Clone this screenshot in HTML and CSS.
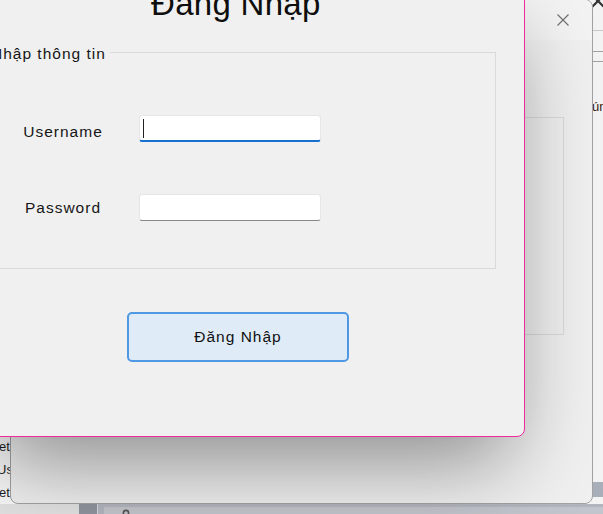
FILE: index.html
```html
<!DOCTYPE html>
<html lang="vi">
<head>
<meta charset="utf-8">
<title>Đăng Nhập</title>
<link rel="stylesheet" href="styles.css">
</head>
<body>
<div class="desktop">
  <div class="back-win">
    <div class="back-left">
      <div class="bl-item bl-get">Get</div>
      <div class="bl-item bl-users">Users</div>
      <div class="bl-item bl-set">Set</div>
    </div>
    <div class="back-main"></div>
    <div class="back-right">
      <svg class="back-close" width="14" height="14" viewBox="0 0 14 14"><path d="M1 1L13 13M13 1L1 13" stroke="#333" stroke-width="2.2" fill="none"/></svg>
      <div class="br-line br-line1"></div>
      <div class="br-line br-line2"></div>
      <div class="br-line br-line3"></div>
      <div class="br-text">ún</div>
      <div class="br-band"></div>
    </div>
    <div class="back-footer">
      <div class="bf-light"></div>
      <div class="bf-dark"></div>
      <div class="bf-sep"></div>
      <div class="bf-panel"><div class="bf-inner"><svg class="bf-icon" width="8" height="8" viewBox="0 0 8 8"><circle cx="4" cy="4" r="2.6" stroke="#555" stroke-width="1.6" fill="none"/></svg></div></div>
    </div>
  </div>

  <div class="mid-win">
    <div class="mid-titlebar">
      <div class="mid-close">
        <svg width="12" height="12" viewBox="0 0 12 12"><path d="M0.5 0.5L11.5 11.5M11.5 0.5L0.5 11.5" stroke="#6f6f6f" stroke-width="1.1" fill="none"/></svg>
      </div>
    </div>
    <div class="mid-body">
      <div class="mid-group"></div>
    </div>
  </div>

  <div class="dialog">
    <div class="dlg-title">Đăng Nhập</div>
    <fieldset class="group">
      <legend class="group-title">Nhập thông tin</legend>
      <div class="row">
        <div class="lbl lbl-user">Username</div>
        <div class="field field-focus"><span class="caret"></span></div>
      </div>
      <div class="row row-pass">
        <div class="lbl lbl-pass">Password</div>
        <div class="field"></div>
      </div>
    </fieldset>
    <div class="btn">Đăng Nhập</div>
  </div>
</div>
</body>
</html>
```

FILE: styles.css
```css
body {
  margin: 0;
  background: #f0f0f0;
}

.desktop {
  position: relative;
  width: 603px;
  height: 514px;
  overflow: hidden;
  font-family: "Liberation Sans", Arial, sans-serif;
  color: #161616;
}

/* ---------- back window ---------- */
.back-win {
  position: absolute;
  left: 0;
  top: 0;
  width: 603px;
  height: 514px;
  display: grid;
  grid-template-columns: 10px 1fr 12px;
  grid-template-rows: 504px 10px;
  background: #f8f8f8;
}

.back-left {
  display: flex;
  flex-direction: column;
  justify-content: flex-end;
  font-size: 13px;
  line-height: 23px;
  color: #1c1c1c;
  white-space: nowrap;
}

.bl-get { margin-left: -11px; }
.bl-users { margin-left: -3px; }
.bl-set { margin-left: -9.6px; }

.back-right {
  display: flex;
  flex-direction: column;
  background: #f3f3f3;
  white-space: nowrap;
}

.back-close {
  margin-top: -6px;
  margin-left: 0;
  flex: none;
}

.br-line { height: 1px; flex: none; }
.br-line1 { margin-top: 22px; background: #c9c9c9; }
.br-line2 { margin-top: 20px; background: #a2a2a2; }
.br-line3 { margin-top: 9px; background: #a2a2a2; }

.br-text {
  margin-top: 37px;
  padding-left: 1px;
  font-size: 13px;
  line-height: 16px;
  color: #3a1a10;
}

.br-band {
  margin-top: auto;
  margin-bottom: 7px;
  height: 15px;
  background: #a9aebb;
}

.back-footer {
  grid-column: 1 / 4;
  display: flex;
}

.bf-light { width: 79px; background: #e2e2e2; }
.bf-dark { width: 18px; background: #8f949e; }
.bf-sep { width: 1px; background: #d6d9de; }
.bf-panel {
  flex: 1;
  background: #b2b5bd;
  padding: 3px 0 0 6px;
  display: flex;
}
.bf-inner {
  flex: 1;
  background: #c2c5cb;
  padding: 2px 0 0 18px;
}
.bf-icon { display: block; }

/* ---------- middle window ---------- */
.mid-win {
  position: absolute;
  left: 10px;
  top: -1px;
  width: 583px;
  height: 505px;
  box-sizing: border-box;
  border: 1px solid #a2a2a2;
  border-radius: 8px;
  background: #f0f0f0;
  display: flex;
  flex-direction: column;
  overflow: hidden;
}

.mid-titlebar {
  height: 40px;
  flex: none;
  display: flex;
  justify-content: flex-end;
  align-items: center;
  background: #f3f3f3;
}

.mid-close {
  width: 44px;
  margin-right: 7px;
  display: flex;
  justify-content: center;
}

.mid-close svg { display: block; }

.mid-body {
  flex: 1;
  display: flex;
  flex-direction: column;
  align-items: flex-end;
}

.mid-group {
  margin-top: 77px;
  margin-right: 28px;
  width: 300px;
  height: 218px;
  box-sizing: border-box;
  border: 1px solid #dadada;
}

/* ---------- login dialog ---------- */
.dialog {
  position: absolute;
  left: -20px;
  top: -20px;
  width: 545px;
  height: 457px;
  box-sizing: border-box;
  border: 1px solid #ee2a9c;
  border-radius: 8px;
  background: #f0f0f0;
  box-shadow: 0 40px 80px -15px rgba(0, 0, 0, 0.42);
  display: flex;
  flex-direction: column;
  align-items: flex-start;
}

.dlg-title {
  margin: 4px 0 0 170px;
  font-size: 33px;
  line-height: 38px;
  letter-spacing: 0.3px;
  color: #0e0e0e;
  white-space: nowrap;
}

.group {
  box-sizing: border-box;
  width: 515px;
  margin: 19px 0 0 0;
  padding: 52px 0 47px 0;
  border: 1px solid #dadada;
  min-inline-size: auto;
}

.group-title {
  margin-left: 7px;
  padding: 3px 4px 0 2px;
  font-size: 15.5px;
  line-height: 18px;
  letter-spacing: 1px;
  white-space: nowrap;
}

.row {
  display: flex;
  align-items: flex-start;
  margin-left: 21px;
}

.row-pass { margin-top: 52px; }

.lbl {
  width: 120px;
  text-align: center;
  font-size: 15.5px;
  line-height: 18px;
  letter-spacing: 1px;
}

.lbl-user { margin-top: 8px; }
.lbl-pass { margin-top: 5px; }

.field {
  margin-left: 16px;
  width: 182px;
  height: 27px;
  box-sizing: border-box;
  background: #ffffff;
  border: 1px solid #e6e6e6;
  border-bottom-color: #878787;
  border-radius: 3px;
  padding: 3px 0 0 3px;
}

.field-focus {
  border-bottom: 2px solid #1570d2;
}

.caret {
  display: block;
  width: 1px;
  height: 19px;
  background: #222;
}

.btn {
  margin: 43px 0 0 146px;
  width: 222px;
  height: 50px;
  box-sizing: border-box;
  border: 2px solid #4f98e4;
  border-radius: 5px;
  background: #e0ebf8;
  display: flex;
  align-items: center;
  justify-content: center;
  font-size: 15.5px;
  letter-spacing: 1px;
  color: #111;
}
```
